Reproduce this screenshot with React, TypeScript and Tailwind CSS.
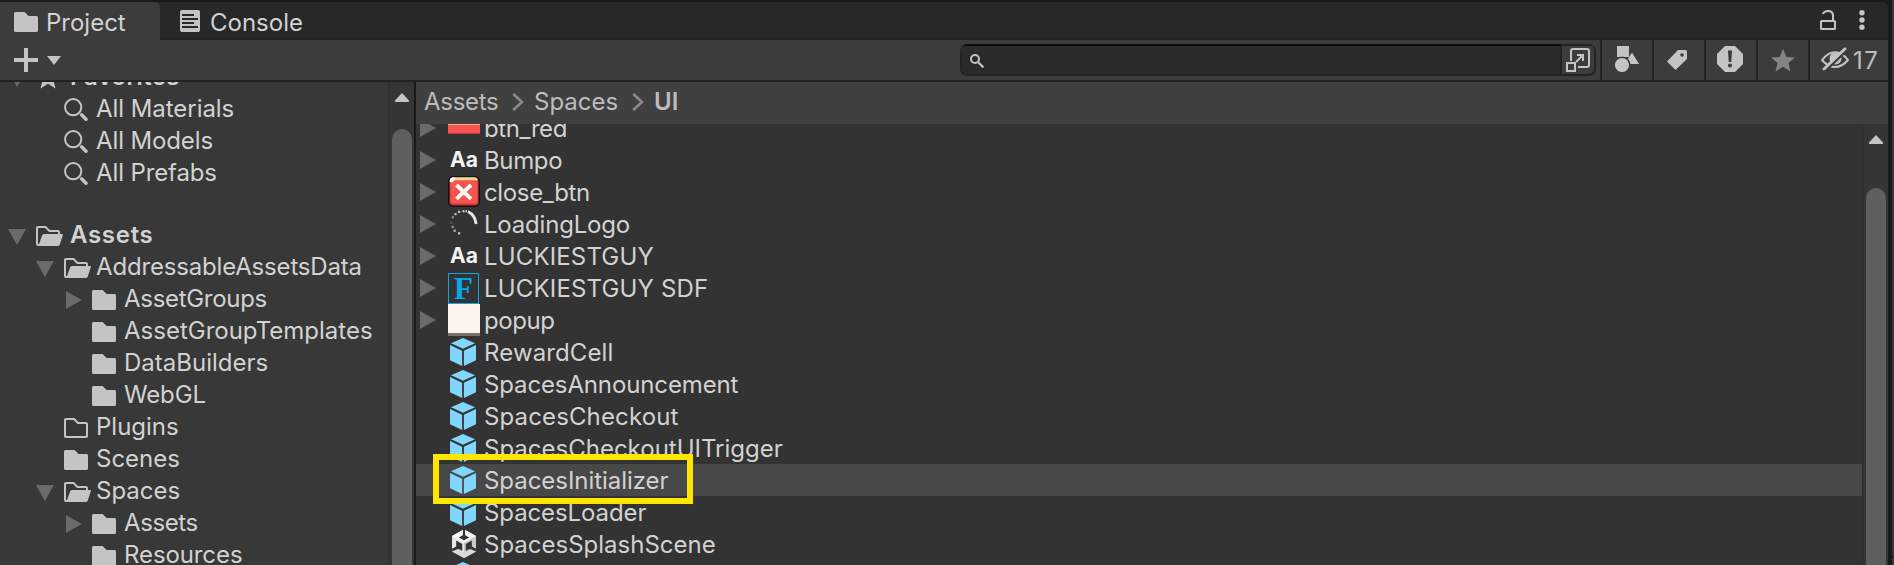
import type { ReactNode } from "react";

const FOLDER = "M1.5 0H10.6L14.6 4H22.5Q24 4 24 5.5V18.5Q24 20 22.5 20H1.5Q0 20 0 18.5V1.5Q0 0 1.5 0Z";

function Folder() {
  return (
    <svg width="24" height="20" viewBox="0 0 24 20" className="shrink-0 fill-[#c4c4c4]">
      <path d={FOLDER} />
    </svg>
  );
}

function EmptyFolder() {
  return (
    <svg width="24" height="20" viewBox="0 0 24 20" className="shrink-0" fill="none" stroke="#c4c4c4" strokeWidth="2">
      <path d="M2 1H10L14 5H22Q23 5 23 6V18Q23 19 22 19H2Q1 19 1 18V2Q1 1 2 1Z" />
    </svg>
  );
}

function OpenFolder() {
  return (
    <svg width="27" height="20" viewBox="0 0 27 20" className="shrink-0">
      <path d="M4 19H2Q1 19 1 18V2Q1 1 2 1H9.5L13.5 5H22Q23 5 23 6V8" fill="none" stroke="#c4c4c4" strokeWidth="2" />
      <path d="M8 8H26Q27.3 8 26.8 9.3L23.8 18.6Q23.3 20 22 20H2.4L6 9.6Q6.6 8 8 8Z" fill="#c4c4c4" />
    </svg>
  );
}

function Magnifier() {
  return (
    <svg width="24" height="24" viewBox="0 0 24 24" className="shrink-0" fill="none" stroke="#c4c4c4">
      <circle cx="9.2" cy="9.2" r="8.1" strokeWidth="2" />
      <path d="M17.6 16.8L22 21.2" strokeWidth="3.4" strokeLinecap="round" />
    </svg>
  );
}

function Star({ size, fill }: { size: number; fill: string }) {
  return (
    <svg width={size} height={size} viewBox="0 0 24 24" className="shrink-0" fill={fill}>
      <path d="M12 .8L15.4 8.9L24 9.5L17.4 15L19.5 23.4L12 18.8L4.5 23.4L6.6 15L0 9.5L8.6 8.9Z" />
    </svg>
  );
}

function Expander({ open }: { open?: boolean }) {
  return open ? (
    <svg width="18" height="16" viewBox="0 0 18 16" className="shrink-0 fill-[#6a6a6a]">
      <path d="M0 0H18L9 16Z" />
    </svg>
  ) : (
    <svg width="16" height="18" viewBox="0 0 16 18" className="shrink-0 fill-[#6a6a6a]">
      <path d="M0 0L16 9L0 18Z" />
    </svg>
  );
}

function Prefab() {
  return (
    <svg width="32" height="32" viewBox="0 0 32 32" className="shrink-0 fill-[#80d6fd]">
      <path d="M15 2L27 7.2L15 12.8L3 7.2Z" />
      <path d="M2 9L14.1 14.8V30L2 24.2Z" />
      <path d="M28 9L15.9 14.8V30L28 24.2Z" />
    </svg>
  );
}

function UnityScene() {
  return (
    <svg width="32" height="32" viewBox="0 0 32 32" className="shrink-0">
      <path d="M14.8 2L4 8V23.5L16 30L28 23.5V8L17.2 2V7L21.4 9.4L16 12.6L10.6 9.4L14.8 7Z" fill="#e6e6e6" />
      <path d="M14.8 2V7L10.6 9.4L16 12.6L21.4 9.4L17.2 7V2L28 8L16 15L4 8Z" fill="#f8f8f8" />
      <path d="M28 8L16 15V30L28 23.5Z" fill="#c9c9c9" />
      <path d="M8.2 12.6L14.2 16V23L8.2 19.6Z M23.8 12.6L17.8 16V23L23.8 19.6Z" fill="#333" />
      <path d="M3.5 21L8.2 18.6L11.6 20.6L5 24Z M28.5 21L23.8 18.6L20.4 20.6L27 24Z" fill="#333" />
      <path d="M4.4 23.6L8.8 21.2L16 25L23.2 21.2L27.6 23.6L16 30Z" fill="#dadada" />
    </svg>
  );
}

function FontAsset() {
  return (
    <div className="flex h-8 w-8 shrink-0 items-center justify-center text-[21px] leading-8 font-bold text-[#f4f4f4]">
      Aa
    </div>
  );
}

function SdfAsset() {
  return (
    <div className="flex h-8 w-8 shrink-0 items-center">
      <div className="flex h-[31px] w-[31px] items-center justify-center border border-[#12a5e6] pt-px font-['Liberation_Serif',serif] text-[31px] leading-none font-bold text-[#05a9f0]">
        F
      </div>
    </div>
  );
}

function CloseAsset() {
  return (
    <svg width="32" height="32" viewBox="0 0 32 32" className="shrink-0">
      <rect x="0" y="0" width="32" height="31" rx="5" fill="#170d0d" />
      <rect x="1.5" y="1.5" width="29" height="28" rx="3.5" fill="#c0393a" />
      <rect x="2.5" y="2" width="27" height="25.5" rx="3.5" fill="#f9544f" />
      <path d="M2 5Q2 1.3 6 1.3H27Q29 1.3 30 4.3H7Q5 4.3 3.5 6Z" fill="#eedb92" />
      <path d="M1.6 5.5Q2 1.3 6 1.3L7 3.6L4 6.5Z" fill="#fff" />
      <path d="M8.5 9L23 22.8M23 9L8.5 22.8" stroke="#fff" strokeWidth="3.8" />
    </svg>
  );
}

function LoadingAsset() {
  const dots = [
    [11, 3.8, 0.7], [7.4, 6, 0.65], [4.8, 9.2, 0.45], [3.2, 14.8, 0.15], [4.6, 18.8, 0.5], [6.6, 22.6, 0.65], [11, 25.2, 0.75],
  ];
  return (
    <svg width="32" height="32" viewBox="0 0 32 32" className="shrink-0">
      {dots.map(([x, y, o]) => (
        <rect key={y} x={x - 1} y={y - 1} width="2.2" height="2.2" fill="#fff" opacity={o} />
      ))}
      <path d="M14.5 3.2H19" stroke="#ddd" strokeWidth="2" strokeDasharray="2 1" fill="none" />
      <path d="M20 3.5Q27 7 28.2 16" stroke="#e6e6e6" strokeWidth="2.8" fill="none" />
    </svg>
  );
}

function RedAsset() {
  return (
    <div className="flex h-8 w-8 shrink-0 flex-col pt-[11px]">
      <div className="h-[2px] bg-[#f2b27c]" />
      <div className="h-[8px] bg-[#f9544f]" />
      <div className="h-px bg-[#b93f3d]" />
    </div>
  );
}

function PopupAsset() {
  return (
    <div className="h-8 w-8 shrink-0">
      <div className="h-[29px] bg-[#fff5ef]" />
      <div className="h-[3px] bg-[#7b6f6d]" />
    </div>
  );
}

type TreeItem = { name: string; level: 1 | 2; icon: ReactNode; state?: "open" | "closed"; tracking?: string };

const tree: TreeItem[] = [
  { name: "AddressableAssetsData", level: 1, icon: <OpenFolder />, state: "open", tracking: "tracking-[-0.17px]" },
  { name: "AssetGroups", level: 2, icon: <Folder />, state: "closed", tracking: "tracking-[-0.3px]" },
  { name: "AssetGroupTemplates", level: 2, icon: <Folder /> },
  { name: "DataBuilders", level: 2, icon: <Folder /> },
  { name: "WebGL", level: 2, icon: <Folder />, tracking: "tracking-[-0.15px]" },
  { name: "Plugins", level: 1, icon: <EmptyFolder /> },
  { name: "Scenes", level: 1, icon: <Folder /> },
  { name: "Spaces", level: 1, icon: <OpenFolder />, state: "open" },
  { name: "Assets", level: 2, icon: <Folder />, state: "closed", tracking: "tracking-[-0.4px]" },
  { name: "Resources", level: 2, icon: <Folder />, tracking: "tracking-[-0.1px]" },
];

function TreeRow({ name, level, icon, state, tracking = "" }: TreeItem) {
  return (
    <div className={level === 1 ? "flex h-8 shrink-0 items-center pl-9" : "flex h-8 shrink-0 items-center pl-16"}>
      <div className={state === "closed" ? "flex w-7 pt-1 pl-[2px]" : "flex w-7 pt-[6px]"}>
        {state && <Expander open={state === "open"} />}
      </div>
      <div className="flex w-8 pt-1">{icon}</div>
      <span className={`pt-[2px] ${tracking}`}>{name}</span>
    </div>
  );
}

const favorites = [
  { name: "All Materials", tracking: "tracking-[-0.05px]" },
  { name: "All Models", tracking: "tracking-[-0.12px]" },
  { name: "All Prefabs", tracking: "tracking-[-0.12px]" },
];

type Asset = { name: string; icon: ReactNode; expandable?: boolean; hovered?: boolean; tracking?: string };

const assets: Asset[] = [
  { name: "btn_red", icon: <RedAsset />, expandable: true, tracking: "tracking-[-0.4px]" },
  { name: "Bumpo", icon: <FontAsset />, expandable: true, tracking: "tracking-[-0.35px]" },
  { name: "close_btn", icon: <CloseAsset />, expandable: true, tracking: "tracking-[-0.35px]" },
  { name: "LoadingLogo", icon: <LoadingAsset />, expandable: true, tracking: "tracking-[-0.2px]" },
  { name: "LUCKIESTGUY", icon: <FontAsset />, expandable: true, tracking: "tracking-[0.15px]" },
  { name: "LUCKIESTGUY SDF", icon: <SdfAsset />, expandable: true, tracking: "tracking-[0.17px]" },
  { name: "popup", icon: <PopupAsset />, expandable: true, tracking: "tracking-[-0.4px]" },
  { name: "RewardCell", icon: <Prefab />, tracking: "tracking-[0.12px]" },
  { name: "SpacesAnnouncement", icon: <Prefab />, tracking: "tracking-[-0.13px]" },
  { name: "SpacesCheckout", icon: <Prefab />, tracking: "tracking-[0.13px]" },
  { name: "SpacesCheckoutUITrigger", icon: <Prefab /> },
  { name: "SpacesInitializer", icon: <Prefab />, hovered: true, tracking: "tracking-[-0.05px]" },
  { name: "SpacesLoader", icon: <Prefab />, tracking: "tracking-[-0.1px]" },
  { name: "SpacesSplashScene", icon: <UnityScene /> },
  { name: "", icon: <Prefab /> },
];

function Scrollbar({ gap }: { gap: string }) {
  return (
    <div className="flex h-full w-[26px] shrink-0 flex-col items-center border-l-2 border-[#303030] bg-[#353535]">
      <svg width="14" height="9" viewBox="0 0 14 9" className="mt-[11px] shrink-0 fill-[#c4c4c4]">
        <path d="M7 0L14 7.5V9H0V7.5Z" />
      </svg>
      <div className={`${gap} w-5 flex-1 rounded-t-full bg-[#5f5f5f]`} />
    </div>
  );
}

function Chevron() {
  return (
    <svg width="12" height="18" viewBox="0 0 12 18" fill="none" stroke="#8a8a8a" strokeWidth="2.6">
      <path d="M1.2 1L10 9L1.2 17" />
    </svg>
  );
}

function ToolButton({ children }: { children: ReactNode }) {
  return <div className="flex h-10 w-[52px] shrink-0 border-l-2 border-[#232323]">{children}</div>;
}

function TabBar() {
  return (
    <div className="flex h-[38px] shrink-0 rounded-tr-[6px] bg-[#282828]">
      <div className="flex w-[160px] items-start rounded-tr-[6px] bg-[#3c3c3c] pl-[14px]">
        <div className="w-8 pt-[10px]"><Folder /></div>
        <span className="mt-[5px]">Project</span>
      </div>
      <div className="flex flex-1 items-start border-b-2 border-[#232323] pl-5">
        <svg width="20" height="22" viewBox="0 0 20 22" className="mt-2 mr-[10px]">
          <rect width="20" height="22" rx="2" fill="#c4c4c4" />
          <path d="M2 5H14M2 9H18M2 13H14M2 17H18" stroke="#282828" strokeWidth="2" />
        </svg>
        <span className="mt-[5px]">Console</span>
        <svg width="16" height="20" viewBox="0 0 16 20" className="mt-2 ml-auto" fill="none" stroke="#c4c4c4" strokeWidth="2">
          <rect x="1" y="11" width="14" height="8" rx=".5" />
          <path d="M3 4Q4 1 8 1Q13 1 13 5.5V11" />
        </svg>
        <svg width="6" height="20" viewBox="0 0 6 20" className="mt-2 mr-[23px] ml-[23px] fill-[#c4c4c4]">
          <circle cx="3" cy="2.7" r="2.7" />
          <circle cx="3" cy="10" r="2.7" />
          <circle cx="3" cy="17.3" r="2.7" />
        </svg>
      </div>
    </div>
  );
}

function Toolbar() {
  return (
    <div className="flex h-[42px] shrink-0 border-b-2 border-[#232323] bg-[#3c3c3c]">
      <svg width="50" height="40" viewBox="0 0 50 40" className="ml-[14px] fill-[#c4c4c4]">
        <path d="M10 8H14V18H24V22H14V32H10V22H0V18H10Z" />
        <path d="M33 16H47L40 25Z" />
      </svg>
      <div className="mt-1 ml-auto flex h-8 w-[636px] overflow-hidden rounded-[7px] border-2 border-t-0 border-[#232323] bg-[#3c3c3c]">
        <div className="w-[600px] border-t-2 border-r-2 border-t-[#0d0d0d] border-r-[#232323] bg-[#2a2a2a]">
          <svg width="14" height="14" viewBox="0 0 14 14" className="mt-2 ml-2" fill="none" stroke="#c4c4c4">
            <circle cx="5" cy="5" r="4" strokeWidth="2" />
            <path d="M8 8L13.4 13.4" strokeWidth="2.2" />
          </svg>
        </div>
        <div className="flex-1 border-t-2 border-[#232323]">
          <svg width="24" height="24" viewBox="0 0 24 24" className="mt-[2px] ml-1" fill="none" stroke="#c4c4c4" strokeWidth="2">
            <path d="M5 13V3Q5 1 7 1H21Q23 1 23 3V17Q23 19 21 19H12" />
            <rect x="1" y="15" width="8" height="8" />
            <path d="M10 14L17 7M11 7H17V13" />
          </svg>
        </div>
      </div>
      <div className="ml-1 flex">
        <ToolButton>
          <svg width="24" height="26" viewBox="0 0 24 26" className="mt-[6px] ml-[13px] fill-[#c4c4c4]">
            <path d="M2 0H14V11H2Z" />
            <path d="M17 6.5L24 18H14.5L12.5 13.5Z" />
            <circle cx="7" cy="19" r="7.8" stroke="#3c3c3c" strokeWidth="1.5" />
          </svg>
        </ToolButton>
        <ToolButton>
          <svg width="20" height="20" viewBox="0 0 20 20" className="mt-[10px] ml-[13px]">
            <path d="M11 0H18.5Q20 0 20 1.5V9L8.5 20L0 11.5Z" fill="#c4c4c4" />
            <circle cx="15" cy="5" r="1.8" fill="#3c3c3c" />
          </svg>
        </ToolButton>
        <ToolButton>
          <svg width="26" height="26" viewBox="0 0 26 26" className="mt-[6px] ml-[11px]">
            <path d="M8 0H18L26 8V18L18 26H8L0 18V8Z" fill="#c4c4c4" />
            <path d="M11 4.5H15L14.3 16H11.7Z" fill="#3c3c3c" />
            <circle cx="13" cy="19.5" r="2" fill="#3c3c3c" />
          </svg>
        </ToolButton>
        <ToolButton>
          <div className="mt-[8px] ml-[13px]"><Star size={24} fill="#848484" /></div>
        </ToolButton>
        <div className="flex h-10 w-20 items-start border-l-2 border-[#232323]">
          <svg width="28" height="24" viewBox="0 0 28 24" className="mt-[7px] ml-[11px]" fill="none" stroke="#c4c4c4">
            <path d="M1 13Q7 5.2 14 5.2Q21 5.2 27 13Q21 20 14 20Q7 20 1 13Z" strokeWidth="2" />
            <circle cx="14.5" cy="11.5" r="6" fill="#c4c4c4" stroke="none" />
            <path d="M4.8 23.5L25.2 3.8" stroke="#3c3c3c" strokeWidth="2.4" />
            <path d="M3 22L24 1.8" strokeWidth="2.8" strokeLinecap="round" />
          </svg>
          <span className="mt-[5px] ml-1 tracking-[1.5px] text-[#bdbdbd]">17</span>
        </div>
      </div>
    </div>
  );
}

export default function App() {
  return (
    <div className="relative flex h-[565px] w-[1894px] overflow-hidden bg-[#191919] font-['Inter',sans-serif] text-[24px] leading-8 whitespace-nowrap text-[#d2d2d2]">
      <div className="flex w-[1888px] flex-col pt-[2px]">
        <TabBar />
        <Toolbar />
        <div className="flex min-h-0 flex-1">
          <div className="flex w-[388px] flex-col overflow-hidden bg-[#383838]">
            <div className="-mt-[22px] flex h-8 shrink-0 items-center pl-2">
              <div className="w-7 pt-[6px]"><Expander open /></div>
              <div className="w-[34px] pt-px"><Star size={24} fill="#c4c4c4" /></div>
              <span className="pt-[2px] font-semibold tracking-[0.3px]">Favorites</span>
            </div>
            {favorites.map(({ name, tracking }) => (
              <div key={name} className="flex h-8 shrink-0 items-center pl-16">
                <div className="w-8 pt-1"><Magnifier /></div>
                <span className={`pt-[2px] ${tracking}`}>{name}</span>
              </div>
            ))}
            <div className="mt-[30px] flex h-8 shrink-0 items-center pl-2">
              <div className="w-7 pt-[6px]"><Expander open /></div>
              <div className="w-[34px] pt-1"><OpenFolder /></div>
              <span className="pt-[2px] font-semibold tracking-[0.7px]">Assets</span>
            </div>
            {tree.map((item) => (
              <TreeRow key={item.level + item.name} {...item} />
            ))}
          </div>
          <Scrollbar gap="mt-[27px]" />
          <div className="w-[2px] bg-[#191919]" />
          <div className="flex min-w-0 flex-1 flex-col">
            <div className="flex h-[42px] shrink-0 items-center bg-[#404040] pb-[2px] pl-2 text-[#bcbcbc]">
              <span className="w-[88px] tracking-[-0.3px]">Assets</span>
              <span className="w-[22px]"><Chevron /></span>
              <span className="w-[98px]">Spaces</span>
              <span className="w-[22px]"><Chevron /></span>
              <span className="font-semibold">UI</span>
            </div>
            <div className="flex min-h-0 flex-1">
              <div className="flex flex-1 flex-col overflow-hidden bg-[#333]">
                <div className="-mt-3" />
                {assets.map(({ name, icon, expandable, hovered, tracking = "" }) => (
                  <div
                    key={name}
                    className={hovered ? "flex h-8 shrink-0 items-center bg-[#484848] pl-1" : "flex h-8 shrink-0 items-center pl-1"}
                  >
                    <div className="w-7">{expandable && <Expander />}</div>
                    {icon}
                    <span className={`pt-[2px] pl-1 ${tracking}`}>{name}</span>
                  </div>
                ))}
              </div>
              <Scrollbar gap="mt-[44px]" />
            </div>
          </div>
        </div>
      </div>
      <div className="ml-1 w-[2px] bg-[#383838] pt-[556px]">
        <div className="h-[2px] bg-[#232323]" />
      </div>
      <div className="absolute top-[454px] left-[433px] h-[50px] w-[260px] border-[6px] border-[#ffe600]" />
    </div>
  );
}
